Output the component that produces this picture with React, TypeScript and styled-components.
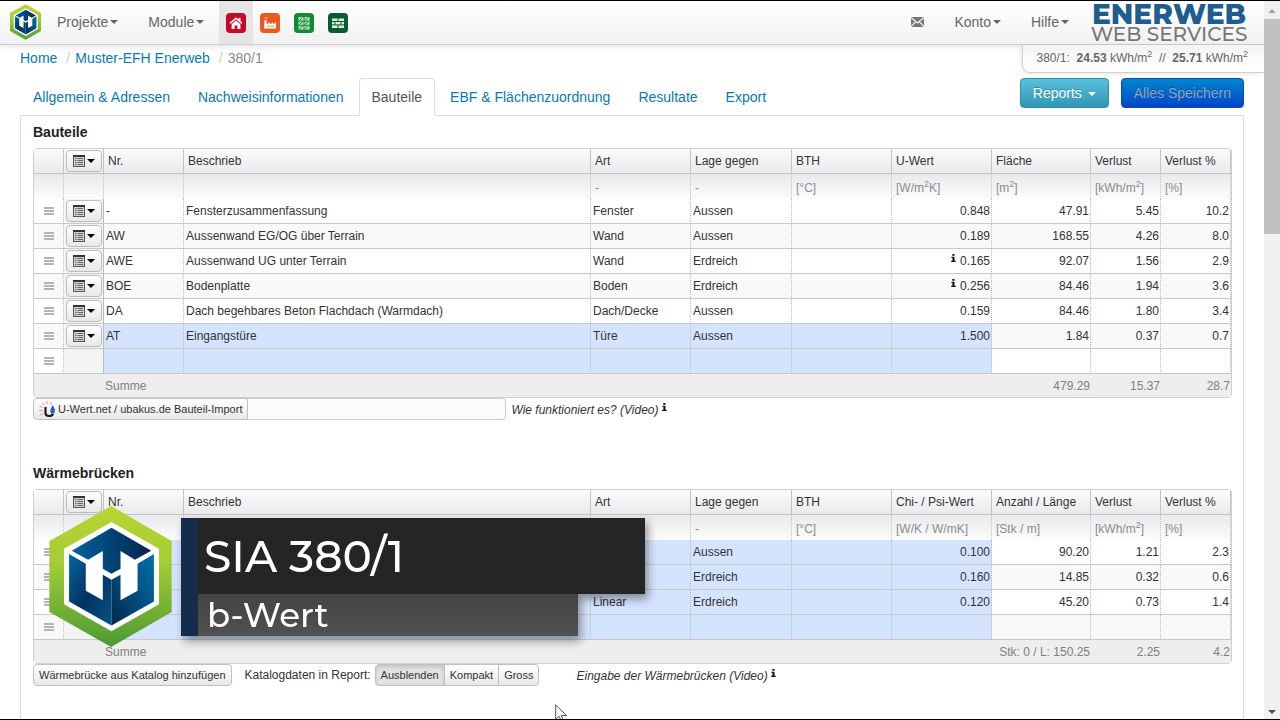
import { ReactNode } from "react";
import styled, { createGlobalStyle, css } from "styled-components";

type Row = {
  nr: string;
  name: string;
  art: string;
  lage: string;
  wert: string;
  info?: boolean;
  menge: string;
  verlust: string;
  prozent: string;
  editable?: boolean;
  empty?: boolean;
};

type Head = { label: string; unit?: ReactNode };

const emptyRow: Row = {
  nr: "", name: "", art: "", lage: "", wert: "", menge: "", verlust: "", prozent: "",
  editable: true, empty: true,
};

const bauteile: Row[] = [
  { nr: "-", name: "Fensterzusammenfassung", art: "Fenster", lage: "Aussen", wert: "0.848", menge: "47.91", verlust: "5.45", prozent: "10.2" },
  { nr: "AW", name: "Aussenwand EG/OG über Terrain", art: "Wand", lage: "Aussen", wert: "0.189", menge: "168.55", verlust: "4.26", prozent: "8.0" },
  { nr: "AWE", name: "Aussenwand UG unter Terrain", art: "Wand", lage: "Erdreich", wert: "0.165", info: true, menge: "92.07", verlust: "1.56", prozent: "2.9" },
  { nr: "BOE", name: "Bodenplatte", art: "Boden", lage: "Erdreich", wert: "0.256", info: true, menge: "84.46", verlust: "1.94", prozent: "3.6" },
  { nr: "DA", name: "Dach begehbares Beton Flachdach (Warmdach)", art: "Dach/Decke", lage: "Aussen", wert: "0.159", menge: "84.46", verlust: "1.80", prozent: "3.4" },
  { nr: "AT", name: "Eingangstüre", art: "Türe", lage: "Aussen", wert: "1.500", menge: "1.84", verlust: "0.37", prozent: "0.7", editable: true },
  emptyRow,
];

const bruecken: Row[] = [
  { nr: "", name: "", art: "", lage: "Aussen", wert: "0.100", menge: "90.20", verlust: "1.21", prozent: "2.3", editable: true },
  { nr: "", name: "", art: "", lage: "Erdreich", wert: "0.160", menge: "14.85", verlust: "0.32", prozent: "0.6", editable: true },
  { nr: "", name: "", art: "Linear", lage: "Erdreich", wert: "0.120", menge: "45.20", verlust: "0.73", prozent: "1.4", editable: true },
  emptyRow,
];

const kwh = <>[kWh/m<sup>2</sup>]</>;

const bauteileHead: Head[] = [
  { label: "Nr." },
  { label: "Beschrieb" },
  { label: "Art", unit: "-" },
  { label: "Lage gegen", unit: "-" },
  { label: "BTH", unit: "[°C]" },
  { label: "U-Wert", unit: <>[W/m<sup>2</sup>K]</> },
  { label: "Fläche", unit: <>[m<sup>2</sup>]</> },
  { label: "Verlust", unit: kwh },
  { label: "Verlust %", unit: "[%]" },
];

const brueckenHead: Head[] = [
  ...bauteileHead.slice(0, 5),
  { label: "Chi- / Psi-Wert", unit: "[W/K / W/mK]" },
  { label: "Anzahl / Länge", unit: "[Stk / m]" },
  ...bauteileHead.slice(7),
];

const tabs = ["Allgemein & Adressen", "Nachweisinformationen", "Bauteile", "EBF & Flächenzuordnung", "Resultate", "Export"];

const colWidths = [30, 40, 80, 0, 100, 101, 100, 100, 99, 70, 70];

const HexLogo = ({ width, height, id }: { width: number; height: number; id: string }) => (
  <svg width={width} height={height} viewBox="148 80 366 422" aria-hidden="true">
    <defs>
      <linearGradient id={id + "g"} x1="0" y1="0" x2="0" y2="1">
        <stop offset="0" stopColor="#b9d531" />
        <stop offset="0.4" stopColor="#a5cd35" />
        <stop offset="1" stopColor="#4b9a34" />
      </linearGradient>
      <linearGradient id={id + "t"} x1="0" y1="0" x2="1" y2="0">
        <stop offset="0" stopColor="#00629c" />
        <stop offset="1" stopColor="#04244c" />
      </linearGradient>
      <linearGradient id={id + "l"} x1="0" y1="0" x2="1" y2="1">
        <stop offset="0" stopColor="#0069a3" />
        <stop offset="0.5" stopColor="#04325f" />
        <stop offset="1" stopColor="#005487" />
      </linearGradient>
      <linearGradient id={id + "r"} x1="1" y1="0" x2="0" y2="1">
        <stop offset="0" stopColor="#0072ad" />
        <stop offset="1" stopColor="#04274d" />
      </linearGradient>
    </defs>
    <path fill={`url(#${id}g)`} d="M333 80 514 185V397L333 502 148 397V185z" />
    <path fill="#fff" d="M334 128 476 208V374L334 455 192 374V208z" />
    <path fill={`url(#${id}t)`} d="M215 214 334 145 453 214 404 241 361 215V268L334 283 308 268V215L264 241z" />
    <path fill={`url(#${id}l)`} d="M207 224 257 253V334L308 362V286L334 301V438L207 366z" />
    <path fill={`url(#${id}r)`} d="M461 224 412 253V334L361 362V286L334 301V438L461 366z" />
  </svg>
);

const HouseIcon = () => (
  <svg width="20" height="20" viewBox="0 0 20 20" aria-hidden="true">
    <path fill="#fff" d="M10 4.2 3.6 9.8 4.6 11 10 6.3 15.4 11 16.4 9.800 14.500 8.100V5h-2v1.400z" />
    <path fill="#fff" d="M5.600 11.200 10 7.500l4.400 3.700V16h-3v-3.500H8.600V16h-3z" />
  </svg>
);

const FactoryIcon = () => (
  <svg width="20" height="20" viewBox="0 0 20 20" aria-hidden="true">
    <path fill="#fff" d="M4 15.500 4.500 7h2l.4 4.300L10 9.300v2l3-2v2l3-2v6.200z" />
    <path fill="none" stroke="#fff" strokeWidth="1" d="M5.300 5.800c.4-1.400 1.500-.6 2.200-1.400" />
    <path stroke="#ea5a1e" strokeWidth="1" strokeDasharray="1.500 1" d="M7.500 13.300h7.500" />
  </svg>
);

const SolarIcon = () => (
  <svg width="20" height="20" viewBox="0 0 20 20" aria-hidden="true">
    <rect x="4.500" y="4" width="11" height="12.500" fill="#b9dfbf" />
    <path stroke="#0f8a36" strokeWidth="1" d="M10 4v12.500M4.500 8.200h11M4.500 12.300h11" />
    <path stroke="#0f8a36" strokeWidth="1" d="M5.500 7.500l3-3M11 7.500l3-3M5.500 11.700l3-3M11 11.700l3-3M5.500 15.800l3-3M11 15.800l3-3" />
  </svg>
);

const BrickIcon = () => (
  <svg width="20" height="20" viewBox="0 0 20 20" aria-hidden="true">
    <rect x="4" y="5.500" width="12" height="9.500" fill="#dcebdf" />
    <path stroke="#0a5c30" strokeWidth="1" d="M4 8.500h12M4 11.900h12M10 5.500v3M7 8.500v3.400M13 8.500v3.400M10 11.900v3.100" />
  </svg>
);

const MailIcon = () => (
  <svg width="13" height="10" viewBox="0 0 13 10" aria-hidden="true">
    <path fill="#777" d="M0 0h13v10H0z" />
    <path fill="none" stroke="#f8f8f8" strokeWidth="1.200" d="M0 .5 6.500 6 13 .5M0 9.500l4.500-4.700M13 9.500 8.500 4.800" />
  </svg>
);

const ListIcon = () => (
  <svg width="12" height="12" viewBox="0 0 12 12" aria-hidden="true">
    <rect x="0.500" y="0.500" width="11" height="11" fill="#d2d2d2" stroke="#555" />
    <path fill="#333" d="M0 0h12v2H0z" />
    <path stroke="#666" strokeWidth="1" d="M2 3.500h1.500M2 5.500h1.500M2 7.500h1.500M2 9.500h1.500M4.500 3.500H10M4.500 5.500H10M4.500 7.500H10M4.500 9.500H10" />
  </svg>
);

const InfoIcon = () => (
  <svg width="5" height="8" viewBox="0 0 5 8" role="img" aria-label="Info">
    <path fill="#111" d="M1.300 0h2.200v1.800H1.300zM.3 2.700h3.200v4.100h1.200V8H.2V6.800h1.200V3.800H.3z" />
  </svg>
);

const UbakusIcon = () => (
  <svg width="17" height="17" viewBox="0 0 17 17" aria-hidden="true">
    <path stroke="#e8858e" strokeWidth="1" d="M8 0v3M3.500 1.500l1.700 2.700M12.500 1.500l-1.400 2.300M.5 5l3 1.500M0 9.500h3.300M1.200 14l2.600-1.500" />
    <path fill="none" stroke="#1d1d1d" strokeWidth="2.200" d="M6.500 6v6q0 3 3.500 3t4-2.500" />
    <path fill="#1c63cc" d="M13.500 4c2 3 2.800 4.500 2.300 7-.5 1.800-3.600 2-4.300.3-.6-2 .8-4.200 2-7.300z" />
  </svg>
);

const Cursor = () => (
  <svg width="14" height="20" viewBox="0 0 14 20" aria-hidden="true">
    <path fill="#fff" stroke="#555" d="M.7.900v14.500l3.400-3.200 2.100 5 2.200-1-2.100-4.700h5.200z" />
  </svg>
);

const DataTable = ({ head, rows, sums, label }: { head: Head[]; rows: Row[]; sums: string[]; label: string }) => (
  <Table aria-label={label}>
    <colgroup>
      {colWidths.map((w, i) => (
        <Col key={i} $width={w} />
      ))}
    </colgroup>
    <thead>
      <tr>
        <HeadCell />
        <HeadCell $tight>
          <MenuButton aria-label="Spalten">
            <ListIcon />
            <Caret $color="#000" />
          </MenuButton>
        </HeadCell>
        {head.map((h) => (
          <HeadCell key={h.label}>{h.label}</HeadCell>
        ))}
      </tr>
      <tr>
        <UnitCell />
        <UnitCell />
        {head.map((h) => (
          <UnitCell key={h.label}>{h.unit}</UnitCell>
        ))}
      </tr>
    </thead>
    <tbody>
      {rows.map((r, i) => (
        <BodyRow key={i}>
          <Cell>
            <Grip />
          </Cell>
          <Cell $action>
            {!r.empty && (
              <MenuButton aria-label={"Aktionen " + r.nr}>
                <ListIcon />
                <Caret $color="#000" />
              </MenuButton>
            )}
          </Cell>
          <Cell $blue={r.editable}>{r.nr}</Cell>
          <Cell $blue={r.editable}>{r.name}</Cell>
          <Cell $blue={r.editable}>{r.art}</Cell>
          <Cell $blue={r.editable}>{r.lage}</Cell>
          <Cell $blue={r.editable} />
          <Cell $blue={r.editable} $num>
            {r.info && <InfoMark><InfoIcon /></InfoMark>}
            {r.wert}
          </Cell>
          <Cell $num>{r.menge}</Cell>
          <Cell $num>{r.verlust}</Cell>
          <Cell $num>{r.prozent}</Cell>
        </BodyRow>
      ))}
    </tbody>
    <tfoot>
      <tr>
        <FootCell colSpan={2} />
        <FootCell>Summe</FootCell>
        <FootCell colSpan={4} />
        <FootCell $num colSpan={2}>{sums[0]}</FootCell>
        <FootCell $num>{sums[1]}</FootCell>
        <FootCell $num>{sums[2]}</FootCell>
      </tr>
    </tfoot>
  </Table>
);

const App = () => (
  <Screen>
    <GlobalStyle />
    <Page>
      <Navbar>
        <Brand href="#" aria-label="Enerweb">
          <HexLogo width={31} height={36} id="s" />
        </Brand>
        <NavLink href="#">Projekte<Caret /></NavLink>
        <NavLink href="#">Module<Caret /></NavLink>
        <ModuleLink href="#" aria-label="380/1" $active><ModuleIcon $color="#c4072b"><HouseIcon /></ModuleIcon></ModuleLink>
        <ModuleLink href="#" aria-label="Industrie"><ModuleIcon $color="#ea5a1e"><FactoryIcon /></ModuleIcon></ModuleLink>
        <ModuleLink href="#" aria-label="Solar"><ModuleIcon $color="#0f8a36"><SolarIcon /></ModuleIcon></ModuleLink>
        <ModuleLink href="#" aria-label="Bauteil"><ModuleIcon $color="#0a5c30"><BrickIcon /></ModuleIcon></ModuleLink>
        <Spacer />
        <NavLink href="#" aria-label="Nachrichten"><MailIcon /></NavLink>
        <NavLink href="#">Konto<Caret /></NavLink>
        <NavLink href="#">Hilfe<Caret /></NavLink>
        <Wordmark>
          <strong>ENERWEB</strong>
          <span>WEB SERVICES</span>
        </Wordmark>
      </Navbar>

      <SubBar>
        <Breadcrumb aria-label="Pfad">
          <a href="#">Home</a>
          <i>/</i>
          <a href="#">Muster-EFH Enerweb</a>
          <i>/</i>
          <span>380/1</span>
        </Breadcrumb>
        <Status>
          380/1:&nbsp; <b>24.53</b> kWh/m<sup>2</sup>&nbsp; //&nbsp; <b>25.71</b> kWh/m<sup>2</sup>
        </Status>
      </SubBar>

      <TabBar>
        <Tabs>
          {tabs.map((t) => (
            <Tab key={t} href="#" $active={t === "Bauteile"}>{t}</Tab>
          ))}
        </Tabs>
        <Actions>
          <ActionButton>Reports <Caret $color="#fff" /></ActionButton>
          <ActionButton $primary>Alles Speichern</ActionButton>
        </Actions>
      </TabBar>

      <Panel>
        <Title>Bauteile</Title>
        <DataTable label="Bauteile" head={bauteileHead} rows={bauteile} sums={["479.29", "15.37", "28.7"]} />
        <Toolbar>
          <SmallButton $joined><UbakusIcon />U-Wert.net / ubakus.de Bauteil-Import</SmallButton>
          <ImportInput aria-label="Bauteil-Import" />
          <VideoLink href="#">Wie funktioniert es? (Video) <InfoIcon /></VideoLink>
        </Toolbar>

        <Title>Wärmebrücken</Title>
        <DataTable label="Wärmebrücken" head={brueckenHead} rows={bruecken} sums={["Stk: 0 / L: 150.25", "2.25", "4.2"]} />
        <Toolbar>
          <SmallButton>Wärmebrücke aus Katalog hinzufügen</SmallButton>
          <ReportLabel id="report">Katalogdaten in Report:</ReportLabel>
          <ButtonGroup role="group" aria-labelledby="report">
            {["Ausblenden", "Kompakt", "Gross"].map((t, i) => (
              <SmallButton key={t} $grouped $pressed={i === 0}>{t}</SmallButton>
            ))}
          </ButtonGroup>
          <VideoLink href="#" $far>Eingabe der Wärmebrücken (Video) <InfoIcon /></VideoLink>
        </Toolbar>
      </Panel>
    </Page>

    <ScrollTrack aria-hidden="true">
      <Arrow $up />
      <Thumb />
      <Spacer />
      <Arrow />
    </ScrollTrack>

    <Banner>
      <HexLogo width={123} height={141} id="b" />
      <BannerBars>
        <BannerTitle>SIA 380/1</BannerTitle>
        <BannerSub>b-Wert</BannerSub>
      </BannerBars>
    </Banner>
    <Pointer><Cursor /></Pointer>
  </Screen>
);

export default App;

const GlobalStyle = createGlobalStyle`
  * { box-sizing: border-box; }
  body {
    margin: 0;
    background: #fff;
    color: #333;
    font: 14px/20px "Liberation Sans", Arial, sans-serif;
  }
  a { color: #0a78b5; text-decoration: none; }
  button, input { font-family: inherit; }
  sup { font-size: 9px; line-height: 0; }
`;

const Screen = styled.div`
  position: relative;
  display: flex;
  height: 100vh;
  overflow: hidden;
  border: solid #000;
  border-width: 1px 0;
`;

const Page = styled.div`
  flex: 1;
  min-width: 0;
  display: flex;
  flex-direction: column;
`;

const Spacer = styled.div`
  flex: 1;
`;

const Navbar = styled.nav`
  display: flex;
  flex-shrink: 0;
  align-items: stretch;
  height: 44px;
  padding: 0 10px;
  background: linear-gradient(#fff, #f1f1f1);
  border-bottom: 1px solid #ccc;
  box-shadow: 0 1px 8px rgba(0, 0, 0, 0.12);
`;

const Brand = styled.a`
  display: flex;
  align-items: flex-start;
  width: 32px;
  padding-top: 3px;
`;

const NavLink = styled.a`
  display: flex;
  align-items: center;
  padding: 0 15px 2px;
  color: #666;
`;

const Caret = styled.span<{ $color?: string }>`
  display: inline-block;
  vertical-align: middle;
  margin-left: 2px;
  border: 4px solid transparent;
  border-top-color: ${(p) => p.$color || "#666"};
  border-bottom: 0;
`;

const ModuleLink = styled.a<{ $active?: boolean }>`
  display: flex;
  align-items: center;
  padding: 0 7px;
  background: ${(p) => (p.$active ? "#e5e5e5" : "none")};
`;

const ModuleIcon = styled.span<{ $color: string }>`
  display: flex;
  border-radius: 4px;
  background: ${(p) => p.$color};
`;

const Wordmark = styled.div`
  display: flex;
  flex-direction: column;
  align-items: center;
  width: 170px;
  font-family: Montserrat, "DejaVu Sans", sans-serif;
  strong {
    color: #205d8f;
    font-size: 28px;
    font-weight: 800;
    line-height: 26px;
  }
  span {
    color: #777;
    font-size: 20px;
    font-weight: 500;
    line-height: 14px;
  }
`;

const SubBar = styled.div`
  display: flex;
  flex-shrink: 0;
  justify-content: space-between;
  height: 28px;
  padding-left: 20px;
`;

const Breadcrumb = styled.nav`
  display: flex;
  gap: 5px;
  padding-top: 3px;
  color: #888;
  i {
    margin-left: 4px;
    color: #ccc;
    font-style: normal;
  }
`;

const Status = styled.div`
  padding: 3px 16px 4px 14px;
  border: solid #d0d0d0;
  border-width: 0 0 1px 1px;
  border-radius: 0 0 0 8px;
  background: linear-gradient(#f4f4f4, #fff);
  box-shadow: -1px 1px 4px rgba(0, 0, 0, 0.1);
  color: #666;
  font-size: 12px;
`;

const TabBar = styled.div`
  display: flex;
  flex-shrink: 0;
  justify-content: space-between;
  align-items: flex-start;
  height: 42px;
  padding: 5px 20px 0;
`;

const Tabs = styled.nav`
  display: flex;
`;

const Tab = styled.a<{ $active?: boolean }>`
  z-index: 1;
  padding: 8px 12px;
  margin-right: 2px;
  border: 1px solid transparent;
  border-radius: 4px 4px 0 0;
  ${(p) =>
    p.$active &&
    css`
      color: #555;
      background: #fff;
      border-color: #ddd #ddd #fff;
    `}
`;

const Actions = styled.div`
  display: flex;
  gap: 12px;
`;

const ActionButton = styled.button<{ $primary?: boolean }>`
  height: 30px;
  padding: 0 12px;
  border: 1px solid ${(p) => (p.$primary ? "#0a4aa8" : "#2f8fab")};
  border-radius: 4px;
  background: ${(p) => (p.$primary ? "linear-gradient(#0088cc, #0044cc)" : "linear-gradient(#5bc0de, #2f96b4)")};
  color: ${(p) => (p.$primary ? "#93a3b8" : "#fff")};
  font-size: 14px;
  text-shadow: 0 -1px 0 rgba(0, 0, 0, 0.25);
`;

const Panel = styled.main`
  flex: 1;
  margin: 0 20px;
  padding: 6px 11px 0 12px;
  border: 1px solid #ddd;
  border-bottom: 0;
`;

const Title = styled.h2`
  margin: 0 0 6px;
  color: #222;
  font-size: 14px;
  line-height: 20px;
`;

const Table = styled.table`
  width: 100%;
  table-layout: fixed;
  border: 1px solid #d0d0d0;
  border-radius: 4px;
  border-spacing: 0;
  font-size: 12px;
  line-height: 16px;
`;

const Col = styled.col<{ $width: number }>`
  width: ${(p) => (p.$width ? p.$width + "px" : "auto")};
`;

const HeadCell = styled.th<{ $tight?: boolean }>`
  height: 25px;
  padding: ${(p) => (p.$tight ? "0 2px" : "0 4px")};
  border: solid #c4c4c4;
  border-width: 0 1px 1px 0;
  background: linear-gradient(#fbfbfb, #e9eaec);
  font-weight: normal;
  text-align: left;
`;

const UnitCell = styled.td`
  height: 25px;
  padding: 3px 4px 0;
  border-right: 1px dotted #c4c4c4;
  background: linear-gradient(#e8e9ec, #fcfcfc);
  color: #8c8c8c;
`;

const Cell = styled.td<{ $blue?: boolean; $num?: boolean; $action?: boolean }>`
  height: 25px;
  padding: ${(p) => (p.$num ? "0 1px" : "0 2px")};
  border-right: 1px dotted #bbb;
  border-bottom: 1px solid #c8c8c8;
  background: ${(p) => (p.$blue ? "#d5e4fe" : p.$action ? "#f4f4f4" : "transparent")};
  text-align: ${(p) => (p.$num ? "right" : "left")};
  white-space: nowrap;
  ${(p) => p.$action && "border-right-style: solid;"}
`;

const BodyRow = styled.tr`
  &:nth-child(even) {
    background: #f9f9f9;
  }
`;

const FootCell = styled.td<{ $num?: boolean }>`
  height: 23px;
  padding: 0 1px;
  background: #eee;
  color: #808080;
  text-align: ${(p) => (p.$num ? "right" : "left")};
`;

const Grip = styled.div`
  width: 10px;
  height: 8px;
  margin: 0 auto;
  border: solid #b4b4b4;
  border-width: 2px 0;
  background: linear-gradient(transparent 1px, #b4b4b4 1px 3px, transparent 3px);
`;

const MenuButton = styled.button`
  display: flex;
  align-items: center;
  justify-content: center;
  width: 36px;
  height: 22px;
  padding: 0;
  border: 1px solid #bbb;
  border-radius: 4px;
  background: linear-gradient(#fff, #e8e8e8);
`;

const InfoMark = styled.span`
  margin-right: 4px;
  svg {
    vertical-align: 3px;
  }
`;

const Toolbar = styled.div`
  display: flex;
  align-items: flex-start;
  height: 22px;
  & + ${Title} {
    margin-top: 43px;
  }
`;

const SmallButton = styled.button<{ $joined?: boolean; $grouped?: boolean; $pressed?: boolean }>`
  display: flex;
  align-items: center;
  gap: 2px;
  height: 22px;
  padding: 0 5px;
  border: 1px solid #c0c0c0;
  border-radius: ${(p) => (p.$joined ? "4px 0 0 4px" : "4px")};
  background: ${(p) => (p.$pressed ? "#e2e2e2" : "linear-gradient(#fff, #e8e8e8)")};
  box-shadow: ${(p) => (p.$pressed ? "inset 0 2px 4px rgba(0, 0, 0, 0.15)" : "none")};
  color: #333;
  font-size: 11px;
  white-space: nowrap;
  ${(p) =>
    p.$grouped &&
    css`
      border-radius: 0;
      margin-right: -1px;
      &:first-child { border-radius: 4px 0 0 4px; }
      &:last-child { border-radius: 0 4px 4px 0; }
    `}
`;

const ImportInput = styled.input`
  width: 258px;
  height: 22px;
  border: 1px solid #ccc;
  border-left: 0;
  border-radius: 0 4px 4px 0;
  background: #fbfbfb;
`;

const VideoLink = styled.a<{ $far?: boolean }>`
  margin-left: ${(p) => (p.$far ? "38px" : "5px")};
  color: #333;
  font-size: 12px;
  font-style: italic;
  line-height: 24px;
  svg {
    vertical-align: 3px;
  }
`;

const ReportLabel = styled.span`
  margin: 0 4px 0 13px;
  font-size: 12px;
  line-height: 22px;
`;

const ButtonGroup = styled.div`
  display: flex;
`;

const ScrollTrack = styled.div`
  display: flex;
  flex-direction: column;
  width: 16px;
  background: #f0f0f0;
`;

const Arrow = styled.div<{ $up?: boolean }>`
  width: 8px;
  margin: ${(p) => (p.$up ? "8px 4px 6px" : "7px 4px 5px")};
  border: 4px solid transparent;
  ${(p) => (p.$up ? "border-top: 0; border-bottom-color: #a3a3a3;" : "border-bottom: 0; border-top-color: #505050;")}
`;

const Thumb = styled.div`
  height: 30%;
  background: #c1c1c1;
`;

const Banner = styled.div`
  position: absolute;
  left: 49px;
  bottom: 72px;
  display: flex;
  align-items: center;
  gap: 9px;
  color: #fff;
  font-family: Montserrat, Inter, sans-serif;
  font-weight: 500;
`;

const BannerBars = styled.div`
  display: flex;
  flex-direction: column;
  align-items: flex-start;
  border-left: 17px solid #142d4c;
  filter: drop-shadow(3px 5px 5px rgba(0, 0, 0, 0.4));
`;

const BannerTitle = styled.div`
  width: 447px;
  padding: 0 6px;
  background: #252525;
  font-size: 44px;
  line-height: 76px;
`;

const BannerSub = styled.div`
  width: 380px;
  padding: 0 9px;
  background: linear-gradient(#434343, #515151);
  font-size: 34px;
  line-height: 42px;
`;

const Pointer = styled.div`
  position: absolute;
  left: 555px;
  top: 703px;
`;
